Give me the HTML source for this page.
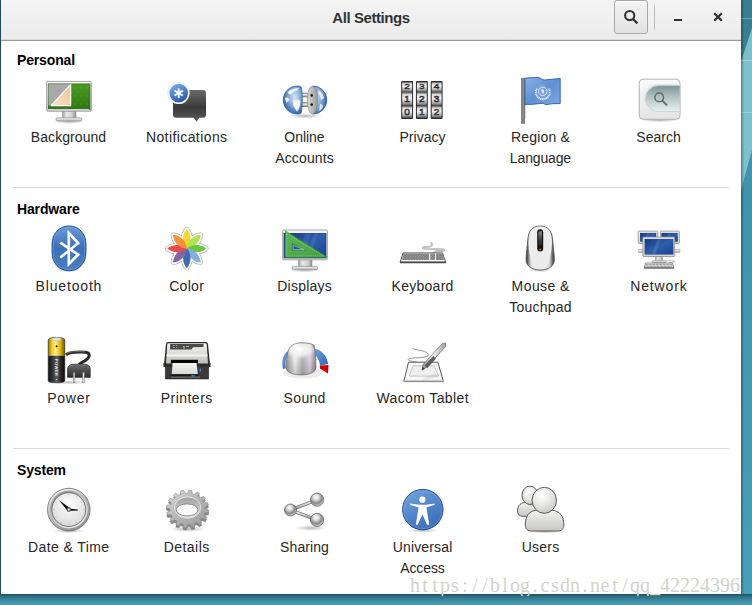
<!DOCTYPE html>
<html><head><meta charset="utf-8">
<style>
html,body{margin:0;padding:0;width:752px;height:605px;overflow:hidden;}
body{position:relative;font-family:"Liberation Sans",sans-serif;background:#3f94ad;}
#desk{position:absolute;left:0;top:0;}
#win{position:absolute;left:1px;top:0;width:740px;height:594px;background:#fff;overflow:hidden;}
#hb{position:absolute;left:1px;top:0;width:740px;height:40px;background:linear-gradient(180deg,#f4f4f4,#ebebeb);border-bottom:1px solid #9a9a9a;box-shadow:inset 0 -1px #dadada;}
#title{position:absolute;left:1px;top:0;width:740px;text-align:center;font-weight:bold;font-size:15px;line-height:36px;color:#2e3436;letter-spacing:-0.42px;}
.sec{position:absolute;left:17px;font-weight:bold;font-size:14px;color:#000;line-height:16px;letter-spacing:-0.15px;}
.sep{position:absolute;left:13px;width:716px;height:1px;background:#dcdcdc;}
.ic{position:absolute;overflow:visible;}
.lb{position:absolute;width:118px;text-align:center;font-size:14px;line-height:21px;color:#262626;white-space:nowrap;}
#sbtn{position:absolute;left:614px;top:0px;width:32px;height:32px;border:1px solid #a8a8a8;border-radius:3px;background:linear-gradient(180deg,#f4f4f4,#e2e2e2);box-shadow:inset 0 1px #fff;}
#wm{position:absolute;left:410px;top:574px;width:331px;height:22px;overflow:hidden;font-family:"Liberation Serif",serif;font-size:20px;line-height:22px;color:#d2d2cb;white-space:nowrap;}
#wm span{display:inline-block;width:10px;text-align:center;}
</style></head><body>
<svg id="desk" width="752" height="605" viewBox="0 0 752 605">
<defs>
<linearGradient id="dBase" x1="0" y1="0" x2="0" y2="1"><stop offset="0" stop-color="#3d8ea4"/><stop offset="1" stop-color="#47a0b8"/></linearGradient>
<linearGradient id="dBot" x1="0" y1="0" x2="0" y2="1"><stop offset="0" stop-color="#22505e"/><stop offset="0.3" stop-color="#33768a"/><stop offset="0.65" stop-color="#3f90a8"/><stop offset="1" stop-color="#459cb4"/></linearGradient>
<linearGradient id="dR" x1="0" y1="0" x2="1" y2="0"><stop offset="0" stop-color="#000" stop-opacity="0.35"/><stop offset="1" stop-color="#000" stop-opacity="0"/></linearGradient>
</defs>
<rect width="752" height="605" fill="url(#dBase)"/>
<polygon points="741,0 752,0 752,28 741,62" fill="#3a7d8e"/>
<polygon points="741,62 752,28 752,150 741,190" fill="#7cc0cc"/>
<line x1="741" y1="18.5" x2="752" y2="18.5" stroke="#8cc6d0" stroke-width="1" opacity="0.6"/>
<line x1="741" y1="60.5" x2="752" y2="60.5" stroke="#b8e0e6" stroke-width="1" opacity="0.6"/>
<line x1="741" y1="112.5" x2="752" y2="112.5" stroke="#b8e0e6" stroke-width="1" opacity="0.5"/>
<rect x="0" y="594" width="752" height="11" fill="url(#dBot)"/>
<rect x="741" y="0" width="3" height="594" fill="url(#dR)"/>
<rect x="0" y="0" width="1" height="594" fill="#1c4c5c"/>
</svg>
<div id="win"></div>
<svg width="0" height="0" style="position:absolute;left:0;top:0"><defs>
<linearGradient id="gBezel" x1="0" y1="0" x2="0" y2="1"><stop offset="0" stop-color="#f4f4f4"/><stop offset="1" stop-color="#d4d4d4"/></linearGradient>
<linearGradient id="gNeck" x1="0" y1="0" x2="1" y2="0"><stop offset="0" stop-color="#a0a0a0"/><stop offset="0.3" stop-color="#e8e8e8"/><stop offset="0.7" stop-color="#d0d0d0"/><stop offset="1" stop-color="#909090"/></linearGradient>
<linearGradient id="gFoot" x1="0" y1="0" x2="0" y2="1"><stop offset="0" stop-color="#f8f8f8"/><stop offset="1" stop-color="#b8b8b8"/></linearGradient>
<radialGradient id="gShadow" cx="0.5" cy="0.5" r="0.5"><stop offset="0" stop-color="#000" stop-opacity="0.28"/><stop offset="1" stop-color="#000" stop-opacity="0"/></radialGradient>
<linearGradient id="gGreen" x1="0" y1="0" x2="0" y2="1"><stop offset="0" stop-color="#4a9a22"/><stop offset="1" stop-color="#2f7a12"/></linearGradient>
<linearGradient id="gCream" x1="1" y1="0" x2="0" y2="1"><stop offset="0" stop-color="#e9c393"/><stop offset="1" stop-color="#fbe6c8"/></linearGradient>
<linearGradient id="gBubble" x1="0" y1="0" x2="0" y2="1"><stop offset="0" stop-color="#6a6a6a"/><stop offset="0.55" stop-color="#3a3a3a"/><stop offset="1" stop-color="#5c5c5c"/></linearGradient>
<linearGradient id="gBlueBall" x1="0.2" y1="0" x2="0.7" y2="1"><stop offset="0" stop-color="#7aaeea"/><stop offset="1" stop-color="#2456a8"/></linearGradient>
<linearGradient id="gBlueOval" x1="0" y1="0" x2="0" y2="1"><stop offset="0" stop-color="#6a9ad8"/><stop offset="0.5" stop-color="#3c70b8"/><stop offset="1" stop-color="#4a7ec4"/></linearGradient>
<linearGradient id="gScreen" x1="0" y1="0" x2="1" y2="1"><stop offset="0" stop-color="#16387e"/><stop offset="0.5" stop-color="#2e5eae"/><stop offset="1" stop-color="#1a4290"/></linearGradient>
<linearGradient id="gCell" x1="0" y1="0" x2="0" y2="1"><stop offset="0" stop-color="#4a4a4a"/><stop offset="0.18" stop-color="#d8d8d8"/><stop offset="0.45" stop-color="#f4f4f4"/><stop offset="0.8" stop-color="#a8a8a8"/><stop offset="1" stop-color="#4a4a4a"/></linearGradient>
<linearGradient id="gFlag" x1="0" y1="0" x2="1" y2="1"><stop offset="0" stop-color="#8ab2e6"/><stop offset="0.5" stop-color="#5e90d4"/><stop offset="1" stop-color="#80a8e0"/></linearGradient>
<linearGradient id="gPole" x1="0" y1="0" x2="1" y2="0"><stop offset="0" stop-color="#5a5a5a"/><stop offset="0.5" stop-color="#9a9a9a"/><stop offset="1" stop-color="#5a5a5a"/></linearGradient>
<linearGradient id="gSearchBox" x1="0" y1="0" x2="0" y2="1"><stop offset="0" stop-color="#fafafa"/><stop offset="1" stop-color="#e4e4e4"/></linearGradient>
<linearGradient id="gSearchField" x1="0" y1="0" x2="0" y2="1"><stop offset="0" stop-color="#7d9696"/><stop offset="0.5" stop-color="#b8c8c8"/><stop offset="1" stop-color="#eef2f2"/></linearGradient>

<radialGradient id="gGlobe" cx="0.6" cy="0.4" r="0.65"><stop offset="0" stop-color="#d6e6f6"/><stop offset="0.55" stop-color="#7aa4d8"/><stop offset="1" stop-color="#2a5aa0"/></radialGradient>
<radialGradient id="gGlobeR" cx="0.3" cy="0.4" r="0.75"><stop offset="0" stop-color="#c8dcf2"/><stop offset="0.6" stop-color="#6a98d0"/><stop offset="1" stop-color="#2a5aa0"/></radialGradient>
<linearGradient id="gFace" x1="0" y1="0" x2="1" y2="0"><stop offset="0" stop-color="#d8d8d8"/><stop offset="0.5" stop-color="#b8b8b8"/><stop offset="1" stop-color="#9a9a9a"/></linearGradient>
<linearGradient id="gPin" x1="0" y1="0" x2="0" y2="1"><stop offset="0" stop-color="#909090"/><stop offset="0.4" stop-color="#f0f0f0"/><stop offset="1" stop-color="#7a7a7a"/></linearGradient>

<pattern id="pKeys" width="1.6" height="1.6" patternUnits="userSpaceOnUse"><rect width="1.6" height="1.6" fill="#6a6a6a"/><rect width="0.8" height="0.8" fill="#a8a8a8"/><rect x="0.8" y="0.8" width="0.8" height="0.8" fill="#a0a0a0"/></pattern>
<linearGradient id="gSquare" x1="0" y1="0" x2="1" y2="1"><stop offset="0" stop-color="#62c24e" stop-opacity="0.9"/><stop offset="1" stop-color="#48a838" stop-opacity="0.9"/></linearGradient>
<linearGradient id="gKbd" x1="0" y1="0" x2="0" y2="1"><stop offset="0" stop-color="#f0f0f0"/><stop offset="1" stop-color="#d0d0d0"/></linearGradient>
<linearGradient id="gMouse" x1="0" y1="0" x2="1" y2="0"><stop offset="0" stop-color="#2a2a2a"/><stop offset="0.18" stop-color="#e6e6e6"/><stop offset="0.5" stop-color="#f2f2f2"/><stop offset="0.82" stop-color="#e0e0e0"/><stop offset="1" stop-color="#2a2a2a"/></linearGradient>
<linearGradient id="gMouseTop" x1="0" y1="0" x2="0" y2="1"><stop offset="0" stop-color="#fff" stop-opacity="0"/><stop offset="0.55" stop-color="#fff" stop-opacity="0"/><stop offset="1" stop-color="#000" stop-opacity="0.0"/></linearGradient>
<linearGradient id="gWheel" x1="0" y1="0" x2="0" y2="1"><stop offset="0" stop-color="#888"/><stop offset="0.5" stop-color="#444"/><stop offset="1" stop-color="#222"/></linearGradient>

<linearGradient id="gBatY" x1="0" y1="0" x2="1" y2="0"><stop offset="0" stop-color="#8a6e00"/><stop offset="0.2" stop-color="#e8c820"/><stop offset="0.45" stop-color="#fff080"/><stop offset="0.75" stop-color="#d8b010"/><stop offset="1" stop-color="#6a5400"/></linearGradient>
<linearGradient id="gBatK" x1="0" y1="0" x2="1" y2="0"><stop offset="0" stop-color="#111"/><stop offset="0.3" stop-color="#3a3a3a"/><stop offset="0.5" stop-color="#5a6060"/><stop offset="0.75" stop-color="#2a2a2a"/><stop offset="1" stop-color="#0a0a0a"/></linearGradient>
<linearGradient id="gPlug" x1="0" y1="0" x2="0" y2="1"><stop offset="0" stop-color="#6a6a6a"/><stop offset="1" stop-color="#2e2e2e"/></linearGradient>
<linearGradient id="gPrinterTop" x1="0" y1="0" x2="0" y2="1"><stop offset="0" stop-color="#f0f0f0"/><stop offset="0.6" stop-color="#d8d8d4"/><stop offset="1" stop-color="#bcbcb8"/></linearGradient>
<linearGradient id="gPaper" x1="0" y1="0" x2="0" y2="1"><stop offset="0" stop-color="#f4f4f2"/><stop offset="1" stop-color="#d8d8d4"/></linearGradient>
<linearGradient id="gKnob" x1="0" y1="0" x2="1" y2="0"><stop offset="0" stop-color="#9a9a9a"/><stop offset="0.3" stop-color="#f8f8f8"/><stop offset="0.55" stop-color="#b8b8b8"/><stop offset="0.8" stop-color="#e8d8e8"/><stop offset="1" stop-color="#8a8a8a"/></linearGradient>
<radialGradient id="gKnobTopR" cx="0.45" cy="0.35" r="0.6"><stop offset="0" stop-color="#fff" stop-opacity="1"/><stop offset="0.6" stop-color="#f4f4f4" stop-opacity="0.8"/><stop offset="1" stop-color="#e8e8e8" stop-opacity="0"/></radialGradient>
<linearGradient id="gKnobShade" x1="0" y1="0" x2="0" y2="1"><stop offset="0" stop-color="#000" stop-opacity="0"/><stop offset="0.5" stop-color="#000" stop-opacity="0.03"/><stop offset="1" stop-color="#000" stop-opacity="0.18"/></linearGradient>
<linearGradient id="gKnobTop" x1="0" y1="0" x2="1" y2="1"><stop offset="0" stop-color="#ffffff"/><stop offset="1" stop-color="#c8c8c8"/></linearGradient>
<linearGradient id="gArc" x1="0" y1="0" x2="1" y2="1"><stop offset="0" stop-color="#7aaae0"/><stop offset="1" stop-color="#2a62b0"/></linearGradient>
<linearGradient id="gPen" x1="0" y1="0" x2="1" y2="0"><stop offset="0" stop-color="#8a8a8a"/><stop offset="0.5" stop-color="#f0f0f0"/><stop offset="1" stop-color="#9a9a9a"/></linearGradient>

<linearGradient id="gBezelRing" x1="0" y1="0" x2="0" y2="1"><stop offset="0" stop-color="#e8e8e8"/><stop offset="0.5" stop-color="#9a9a9a"/><stop offset="1" stop-color="#d8d8d8"/></linearGradient>
<linearGradient id="gBevA" x1="0.2" y1="0" x2="0.8" y2="1"><stop offset="0" stop-color="#f2f2f2"/><stop offset="0.5" stop-color="#b4b4b4"/><stop offset="1" stop-color="#8a8a8a"/></linearGradient>
<linearGradient id="gBevB" x1="0.2" y1="0" x2="0.8" y2="1"><stop offset="0" stop-color="#8c8c8c"/><stop offset="0.5" stop-color="#c8c8c8"/><stop offset="1" stop-color="#f4f4f4"/></linearGradient>
<linearGradient id="gBezelRing2" x1="0" y1="0" x2="1" y2="1"><stop offset="0" stop-color="#f4f4f4"/><stop offset="0.5" stop-color="#d4d4d4"/><stop offset="1" stop-color="#f0f0f0"/></linearGradient>
<radialGradient id="gFace2" cx="0.5" cy="0.35" r="0.7"><stop offset="0" stop-color="#ffffff"/><stop offset="1" stop-color="#d6d6d6"/></radialGradient>
<linearGradient id="gGear" x1="0" y1="0" x2="1" y2="1"><stop offset="0" stop-color="#dcdcdc"/><stop offset="0.5" stop-color="#b4b4b4"/><stop offset="1" stop-color="#9a9a9a"/></linearGradient>
<linearGradient id="gGearRim" x1="0" y1="0" x2="0" y2="1"><stop offset="0" stop-color="#a0a0a0"/><stop offset="0.6" stop-color="#c8c8c8"/><stop offset="1" stop-color="#e8e8e8"/></linearGradient>
<radialGradient id="gBall" cx="0.42" cy="0.32" r="0.7"><stop offset="0" stop-color="#ffffff"/><stop offset="0.3" stop-color="#dcdcdc"/><stop offset="0.65" stop-color="#888888"/><stop offset="1" stop-color="#d0d0d0"/></radialGradient>
<linearGradient id="gRod" x1="0" y1="0" x2="0" y2="1"><stop offset="0" stop-color="#fafafa"/><stop offset="1" stop-color="#9a9a9a"/></linearGradient>
<linearGradient id="gUA" x1="0.2" y1="0" x2="0.8" y2="1"><stop offset="0" stop-color="#72a2dc"/><stop offset="0.6" stop-color="#4a7ec6"/><stop offset="1" stop-color="#3a6cb4"/></linearGradient>
<radialGradient id="gUser" cx="0.4" cy="0.3" r="0.75"><stop offset="0" stop-color="#ffffff"/><stop offset="0.6" stop-color="#e2e2de"/><stop offset="1" stop-color="#c4c4c0"/></radialGradient>
<linearGradient id="gUserBody" x1="0" y1="0" x2="0" y2="1"><stop offset="0" stop-color="#f6f6f4"/><stop offset="0.5" stop-color="#dcdcd8"/><stop offset="1" stop-color="#c8c8c4"/></linearGradient>
</defs></svg>
<div id="hb"></div>
<div id="title">All Settings</div>
<div id="sbtn"></div>
<svg style="position:absolute;left:614px;top:0" width="34" height="34" viewBox="0 0 34 34"><circle cx="15.7" cy="15.6" r="4.6" fill="none" stroke="#2e3436" stroke-width="2.1"/><line x1="19" y1="19" x2="23.4" y2="23.4" stroke="#2e3436" stroke-width="2.3" stroke-linecap="butt"/></svg>
<div style="position:absolute;left:654px;top:2px;width:1px;height:31px;background:linear-gradient(180deg,rgba(180,180,180,0),#b8b8b8 20%,#b8b8b8 80%,rgba(180,180,180,0))"></div>
<div style="position:absolute;left:674px;top:18.5px;width:8px;height:2.5px;background:#2e3436"></div>
<svg style="position:absolute;left:710px;top:9px" width="16" height="16" viewBox="0 0 16 16"><path d="M4.2 4.2L11.8 11.8M11.8 4.2L4.2 11.8" stroke="#2e3436" stroke-width="2.3"/></svg>

<div class="sec" style="top:51.85px">Personal</div>
<div class="sep" style="top:187px"></div>
<div class="sec" style="top:201px">Hardware</div>
<div class="sep" style="top:448px"></div>
<div class="sec" style="top:462px">System</div>
<div class="lb" style="left:9.5px;top:126.85px"><span style="letter-spacing:0.06px;margin-right:-0.06px">Background</span></div>
<svg class="ic" style="left:45px;top:76px" width="48" height="48" viewBox="0 0 48 48"><g transform="translate(0,0)">
<ellipse cx="24" cy="45.5" rx="15" ry="2.5" fill="url(#gShadow)"/>
<rect x="17.5" y="35" width="13.5" height="8" fill="url(#gNeck)" stroke="#9a9a9a" stroke-width="0.6"/>
<rect x="11" y="41.8" width="25.8" height="3.2" rx="1.6" fill="url(#gFoot)" stroke="#8a8a8a" stroke-width="0.7"/>
<rect x="1.6" y="5.4" width="44.8" height="29.8" rx="1.2" fill="url(#gBezel)" stroke="#9c9c9c" stroke-width="0.9"/>

<rect x="3.2" y="7.9" width="41.8" height="24.8" fill="url(#gGreen)" stroke="#1f5a0a" stroke-width="0.6"/>
<g fill="#7cc050" opacity="0.2"><circle cx="30" cy="12" r="1"/><circle cx="36" cy="12" r="1"/><circle cx="42" cy="12" r="1"/><circle cx="33" cy="16" r="1"/><circle cx="39" cy="16" r="1"/><circle cx="30" cy="20" r="1"/><circle cx="36" cy="20" r="1"/><circle cx="42" cy="20" r="1"/><circle cx="33" cy="24" r="1"/><circle cx="39" cy="24" r="1"/><circle cx="30" cy="28" r="1"/><circle cx="36" cy="28" r="1"/><circle cx="42" cy="28" r="1"/></g>
<rect x="3.5" y="8.2" width="22.2" height="21.3" fill="#a9a9a9"/>
<path d="M6.2 29.6 L25.6 8.6 L25.6 29.6 Z" fill="url(#gCream)" stroke="#fff" stroke-width="1.3" stroke-linejoin="round"/>
<rect x="44" y="33.2" width="1.6" height="0.8" fill="#555"/>

</g></svg>
<div class="lb" style="left:127.5px;top:126.85px"><span style="letter-spacing:0.41px;margin-right:-0.41px">Notifications</span></div>
<svg class="ic" style="left:163px;top:76px" width="48" height="48" viewBox="0 0 48 48"><g transform="translate(-1,0)">
<path d="M14 13.9 H41 Q44 13.9 44 16.9 V38.7 Q44 41.7 41 41.7 H37.2 L34.5 45.8 L31.8 41.7 H14 Q11 41.7 11 38.7 V16.9 Q11 13.9 14 13.9 Z" fill="url(#gBubble)"/>
<circle cx="16.7" cy="17.1" r="11" fill="#fff"/>
<circle cx="16.7" cy="17.1" r="11" fill="none" stroke="#000" stroke-opacity="0.12" stroke-width="0.8"/>
<circle cx="16.7" cy="17.1" r="9.3" fill="url(#gBlueBall)"/>
<g stroke="#fff" stroke-width="2" stroke-linecap="butt"><line x1="16.7" y1="12.3" x2="16.7" y2="21.9"/><line x1="12.5" y1="14.7" x2="20.9" y2="19.5"/><line x1="12.5" y1="19.5" x2="20.9" y2="14.7"/></g>
</g></svg>
<div class="lb" style="left:245.5px;top:126.85px"><span style="letter-spacing:-0.04px;margin-right:0.04px">Online</span><br><span style="letter-spacing:0.14px;margin-right:-0.14px">Accounts</span></div>
<svg class="ic" style="left:281px;top:76px" width="48" height="48" viewBox="0 0 48 48"><g transform="translate(-1,0)">
<ellipse cx="25" cy="40" rx="18" ry="2.6" fill="url(#gShadow)"/>
<rect x="20.5" y="17" width="8" height="4" fill="url(#gPin)" stroke="#6a6a6a" stroke-width="0.5"/>
<rect x="20.5" y="26.6" width="8" height="4" fill="url(#gPin)" stroke="#6a6a6a" stroke-width="0.5"/>
<path d="M20.6 10.4 A14 14 0 1 0 20.6 37.6 A1.6 13.6 0 0 0 20.6 10.4 Z" fill="url(#gGlobe)" stroke="#2a5a9e" stroke-width="0.8"/>
<path d="M7.5 16.5 Q12 11.6 19 12 L17.5 14.4 Q13 15.4 11.4 18.4 Q9 19 7.5 16.5 Z M12.6 24.4 Q16.6 22.2 20.2 24.6 Q20.8 31 17.2 35.6 Q14.6 32 13.2 29.6 Z M5 22 Q8.4 20.6 9.6 24 L6.4 27 Z" fill="#f4f4f0" stroke="#b8c4cc" stroke-width="0.3"/>
<path d="M32.8 10 A14 14 0 0 1 32.8 38 Z" fill="url(#gGlobeR)" stroke="#2a5a9e" stroke-width="0.8"/>
<path d="M39 14 Q43 17 44 22 L41 24 Q40 19 38 17 Z M40 28 Q43 28 43 31 Q41 34 39 35 Z" fill="#f2f2f0" opacity="0.85"/>
<ellipse cx="32.5" cy="24" rx="5.2" ry="14" fill="url(#gFace)" stroke="#7a7a7a" stroke-width="0.6"/>
<ellipse cx="31.7" cy="19.4" rx="1.2" ry="1.3" fill="#111"/>
<ellipse cx="31.7" cy="28.6" rx="1.2" ry="1.3" fill="#111"/>
</g></svg>
<div class="lb" style="left:363.5px;top:126.85px"><span style="letter-spacing:0.02px;margin-right:-0.02px">Privacy</span></div>
<svg class="ic" style="left:399px;top:76px" width="48" height="48" viewBox="0 0 48 48"><g transform="translate(-1,0)"><rect x="3.2" y="4.9" width="11.9" height="38" rx="1.2" fill="#2a2a2a"/><rect x="4.2" y="5.9" width="9.9" height="10.1" fill="url(#gCell)"/><text x="0" y="0" transform="translate(9.15,10.4) scale(1.05,0.72)" dy="3.4" font-family="Liberation Sans" font-size="9.6" text-anchor="middle" fill="none" stroke="#2a2a2a" stroke-width="0.65">2</text><rect x="4.2" y="16.0" width="9.9" height="13.8" fill="url(#gCell)"/><text x="0" y="0" transform="translate(9.15,23.0) scale(1.05,1.0)" dy="3.4" font-family="Liberation Sans" font-size="9.6" text-anchor="middle" fill="none" stroke="#2a2a2a" stroke-width="0.65">1</text><rect x="4.2" y="29.8" width="9.9" height="12.1" fill="url(#gCell)"/><text x="0" y="0" transform="translate(9.15,36.4) scale(1.05,0.85)" dy="3.4" font-family="Liberation Sans" font-size="9.6" text-anchor="middle" fill="none" stroke="#2a2a2a" stroke-width="0.65">0</text><rect x="17.9" y="4.9" width="11.9" height="38" rx="1.2" fill="#2a2a2a"/><rect x="18.9" y="5.9" width="9.9" height="10.1" fill="url(#gCell)"/><text x="0" y="0" transform="translate(23.85,10.4) scale(1.05,0.72)" dy="3.4" font-family="Liberation Sans" font-size="9.6" text-anchor="middle" fill="none" stroke="#2a2a2a" stroke-width="0.65">3</text><rect x="18.9" y="16.0" width="9.9" height="13.8" fill="url(#gCell)"/><text x="0" y="0" transform="translate(23.85,23.0) scale(1.05,1.0)" dy="3.4" font-family="Liberation Sans" font-size="9.6" text-anchor="middle" fill="none" stroke="#2a2a2a" stroke-width="0.65">2</text><rect x="18.9" y="29.8" width="9.9" height="12.1" fill="url(#gCell)"/><text x="0" y="0" transform="translate(23.85,36.4) scale(1.05,0.85)" dy="3.4" font-family="Liberation Sans" font-size="9.6" text-anchor="middle" fill="none" stroke="#2a2a2a" stroke-width="0.65">1</text><rect x="32.7" y="4.9" width="11.9" height="38" rx="1.2" fill="#2a2a2a"/><rect x="33.7" y="5.9" width="9.9" height="10.1" fill="url(#gCell)"/><text x="0" y="0" transform="translate(38.65,10.4) scale(1.05,0.72)" dy="3.4" font-family="Liberation Sans" font-size="9.6" text-anchor="middle" fill="none" stroke="#2a2a2a" stroke-width="0.65">4</text><rect x="33.7" y="16.0" width="9.9" height="13.8" fill="url(#gCell)"/><text x="0" y="0" transform="translate(38.65,23.0) scale(1.05,1.0)" dy="3.4" font-family="Liberation Sans" font-size="9.6" text-anchor="middle" fill="none" stroke="#2a2a2a" stroke-width="0.65">3</text><rect x="33.7" y="29.8" width="9.9" height="12.1" fill="url(#gCell)"/><text x="0" y="0" transform="translate(38.65,36.4) scale(1.05,0.85)" dy="3.4" font-family="Liberation Sans" font-size="9.6" text-anchor="middle" fill="none" stroke="#2a2a2a" stroke-width="0.65">2</text></g></svg>
<div class="lb" style="left:481.5px;top:126.85px"><span style="letter-spacing:0.18px;margin-right:-0.18px">Region &amp;</span><br><span style="letter-spacing:-0.14px;margin-right:0.14px">Language</span></div>
<svg class="ic" style="left:517px;top:76px" width="48" height="48" viewBox="0 0 48 48"><g transform="translate(-1,0)">
<rect x="5.2" y="1.8" width="3.7" height="46" fill="url(#gPole)"/>
<path d="M8.9 2.2 Q16 1.2 23.5 1.8 Q26 4.2 29 4 Q37 3.2 44.2 2.4 L44.2 27.6 Q37 27.2 30 28.6 Q27 26.5 23 27.6 Q15 28.8 8.9 28.4 Z" fill="url(#gFlag)" stroke="#2c5aa4" stroke-width="0.9" stroke-linejoin="round"/>
<path d="M20.8 12.6 A7 7 0 0 0 26.8 23.2 M32.8 12.6 A7 7 0 0 1 26.8 23.2" fill="none" stroke="#f0f6fc" stroke-width="1.8" stroke-dasharray="1.2 0.5" opacity="0.9"/>
<circle cx="26.8" cy="15.4" r="4.2" fill="none" stroke="#f0f6fc" stroke-width="0.9" opacity="0.85"/>
<path d="M25 13.6 Q27 12.8 28.2 14.2 Q27 16 28.6 17.2 L26.4 17.6 Q25.4 16 25 13.6 Z" fill="#f0f6fc" opacity="0.8"/>
<ellipse cx="26" cy="15.5" rx="6" ry="7" fill="#fff" opacity="0.12"/>
<rect x="9" y="29" width="1.2" height="14" fill="#e0e0e0"/>
</g></svg>
<div class="lb" style="left:599.5px;top:126.85px"><span style="letter-spacing:0px;margin-right:0px">Search</span></div>
<svg class="ic" style="left:635px;top:76px" width="48" height="48" viewBox="0 0 48 48"><g transform="translate(-1,0)">
<ellipse cx="25.6" cy="44.2" rx="19" ry="2.2" fill="url(#gShadow)"/>
<rect x="5.2" y="3.2" width="40.8" height="40.1" rx="4" fill="url(#gSearchBox)" stroke="#a8a8a8" stroke-width="0.9"/>
<path d="M46 7.9 H24.2 A14.7 14.7 0 0 0 24.2 37.3 H46 Z" fill="#e6e9e9"/>
<path d="M46 9.6 H24.6 A13 13 0 0 0 24.6 35.6 H46 Z" fill="url(#gSearchField)" stroke="#c4cccc" stroke-width="0.8"/>
<circle cx="25.2" cy="21.4" r="4.3" fill="none" stroke="#636868" stroke-width="1.5"/>
<line x1="28.4" y1="24.6" x2="33" y2="29.4" stroke="#636868" stroke-width="1.8"/>
</g></svg>
<div class="lb" style="left:9.5px;top:276.05px"><span style="letter-spacing:0.83px;margin-right:-0.83px">Bluetooth</span></div>
<svg class="ic" style="left:45px;top:224px" width="48" height="48" viewBox="0 0 48 48">
<ellipse cx="24" cy="46" rx="14" ry="2" fill="url(#gShadow)"/>
<path d="M24 2 C34 2 40.9 10 40.9 20 V28.8 C40.9 38.8 34 46.8 24 46.8 C14 46.8 7.1 38.8 7.1 28.8 V20 C7.1 10 14 2 24 2 Z" fill="url(#gBlueOval)" stroke="#1d4c98" stroke-width="1"/>
<path d="M24 3.2 C33 3.2 39.7 10.6 39.7 20 V28.8 C39.7 38 33 45.6 24 45.6 C15 45.6 8.3 38 8.3 28.8 V20 C8.3 10.6 15 3.2 24 3.2 Z" fill="none" stroke="#8ab4e6" stroke-width="0.6" opacity="0.7"/>
<path d="M15.3 18.6 L33.2 30.6 L23.8 40 L23.8 9 L33.2 19.2 L15.3 33.4" fill="none" stroke="#fff" stroke-width="2.6" stroke-linejoin="miter" stroke-miterlimit="6"/>
</svg>
<div class="lb" style="left:127.5px;top:276.05px"><span style="letter-spacing:0.3px;margin-right:-0.3px">Color</span></div>
<svg class="ic" style="left:163px;top:224px" width="48" height="48" viewBox="0 0 48 48"><g><path d="M0 0 C4.9 -5 4.9 -14.5 0 -19.6 C-4.9 -14.5 -4.9 -5 0 0 Z" transform="translate(23.8,24.6) rotate(0)" fill="#bbb" stroke="#b0b0b0" stroke-width="4.4" stroke-linejoin="round"/><path d="M0 0 C4.9 -5 4.9 -14.5 0 -19.6 C-4.9 -14.5 -4.9 -5 0 0 Z" transform="translate(23.8,24.6) rotate(45)" fill="#bbb" stroke="#b0b0b0" stroke-width="4.4" stroke-linejoin="round"/><path d="M0 0 C4.9 -5 4.9 -14.5 0 -19.6 C-4.9 -14.5 -4.9 -5 0 0 Z" transform="translate(23.8,24.6) rotate(90)" fill="#bbb" stroke="#b0b0b0" stroke-width="4.4" stroke-linejoin="round"/><path d="M0 0 C4.9 -5 4.9 -14.5 0 -19.6 C-4.9 -14.5 -4.9 -5 0 0 Z" transform="translate(23.8,24.6) rotate(135)" fill="#bbb" stroke="#b0b0b0" stroke-width="4.4" stroke-linejoin="round"/><path d="M0 0 C4.9 -5 4.9 -14.5 0 -19.6 C-4.9 -14.5 -4.9 -5 0 0 Z" transform="translate(23.8,24.6) rotate(180)" fill="#bbb" stroke="#b0b0b0" stroke-width="4.4" stroke-linejoin="round"/><path d="M0 0 C4.9 -5 4.9 -14.5 0 -19.6 C-4.9 -14.5 -4.9 -5 0 0 Z" transform="translate(23.8,24.6) rotate(225)" fill="#bbb" stroke="#b0b0b0" stroke-width="4.4" stroke-linejoin="round"/><path d="M0 0 C4.9 -5 4.9 -14.5 0 -19.6 C-4.9 -14.5 -4.9 -5 0 0 Z" transform="translate(23.8,24.6) rotate(270)" fill="#bbb" stroke="#b0b0b0" stroke-width="4.4" stroke-linejoin="round"/><path d="M0 0 C4.9 -5 4.9 -14.5 0 -19.6 C-4.9 -14.5 -4.9 -5 0 0 Z" transform="translate(23.8,24.6) rotate(315)" fill="#bbb" stroke="#b0b0b0" stroke-width="4.4" stroke-linejoin="round"/><path d="M0 0 C4.9 -5 4.9 -14.5 0 -19.6 C-4.9 -14.5 -4.9 -5 0 0 Z" transform="translate(23.8,24.6) rotate(0)" fill="#fff" stroke="#fff" stroke-width="3" stroke-linejoin="round"/><path d="M0 0 C4.9 -5 4.9 -14.5 0 -19.6 C-4.9 -14.5 -4.9 -5 0 0 Z" transform="translate(23.8,24.6) rotate(45)" fill="#fff" stroke="#fff" stroke-width="3" stroke-linejoin="round"/><path d="M0 0 C4.9 -5 4.9 -14.5 0 -19.6 C-4.9 -14.5 -4.9 -5 0 0 Z" transform="translate(23.8,24.6) rotate(90)" fill="#fff" stroke="#fff" stroke-width="3" stroke-linejoin="round"/><path d="M0 0 C4.9 -5 4.9 -14.5 0 -19.6 C-4.9 -14.5 -4.9 -5 0 0 Z" transform="translate(23.8,24.6) rotate(135)" fill="#fff" stroke="#fff" stroke-width="3" stroke-linejoin="round"/><path d="M0 0 C4.9 -5 4.9 -14.5 0 -19.6 C-4.9 -14.5 -4.9 -5 0 0 Z" transform="translate(23.8,24.6) rotate(180)" fill="#fff" stroke="#fff" stroke-width="3" stroke-linejoin="round"/><path d="M0 0 C4.9 -5 4.9 -14.5 0 -19.6 C-4.9 -14.5 -4.9 -5 0 0 Z" transform="translate(23.8,24.6) rotate(225)" fill="#fff" stroke="#fff" stroke-width="3" stroke-linejoin="round"/><path d="M0 0 C4.9 -5 4.9 -14.5 0 -19.6 C-4.9 -14.5 -4.9 -5 0 0 Z" transform="translate(23.8,24.6) rotate(270)" fill="#fff" stroke="#fff" stroke-width="3" stroke-linejoin="round"/><path d="M0 0 C4.9 -5 4.9 -14.5 0 -19.6 C-4.9 -14.5 -4.9 -5 0 0 Z" transform="translate(23.8,24.6) rotate(315)" fill="#fff" stroke="#fff" stroke-width="3" stroke-linejoin="round"/><g opacity="0.9"><path d="M0 0 C4.9 -5 4.9 -14.5 0 -19.6 C-4.9 -14.5 -4.9 -5 0 0 Z" transform="translate(23.8,24.6) rotate(0)" fill="#f2d41a"/><path d="M0 0 C4.9 -5 4.9 -14.5 0 -19.6 C-4.9 -14.5 -4.9 -5 0 0 Z" transform="translate(23.8,24.6) rotate(45)" fill="#a8e03a"/><path d="M0 0 C4.9 -5 4.9 -14.5 0 -19.6 C-4.9 -14.5 -4.9 -5 0 0 Z" transform="translate(23.8,24.6) rotate(90)" fill="#5cc02a"/><path d="M0 0 C4.9 -5 4.9 -14.5 0 -19.6 C-4.9 -14.5 -4.9 -5 0 0 Z" transform="translate(23.8,24.6) rotate(135)" fill="#78a6dc"/><path d="M0 0 C4.9 -5 4.9 -14.5 0 -19.6 C-4.9 -14.5 -4.9 -5 0 0 Z" transform="translate(23.8,24.6) rotate(180)" fill="#2a5aa8"/><path d="M0 0 C4.9 -5 4.9 -14.5 0 -19.6 C-4.9 -14.5 -4.9 -5 0 0 Z" transform="translate(23.8,24.6) rotate(225)" fill="#7a5698"/><path d="M0 0 C4.9 -5 4.9 -14.5 0 -19.6 C-4.9 -14.5 -4.9 -5 0 0 Z" transform="translate(23.8,24.6) rotate(270)" fill="#e83838"/><path d="M0 0 C4.9 -5 4.9 -14.5 0 -19.6 C-4.9 -14.5 -4.9 -5 0 0 Z" transform="translate(23.8,24.6) rotate(315)" fill="#f28a22"/></g></g></svg>
<div class="lb" style="left:245.5px;top:276.05px"><span style="letter-spacing:0.23px;margin-right:-0.23px">Displays</span></div>
<svg class="ic" style="left:281px;top:224px" width="48" height="48" viewBox="0 0 48 48"><g transform="translate(0,0.6)">
<ellipse cx="24" cy="45.5" rx="15" ry="2.5" fill="url(#gShadow)"/>
<rect x="17.5" y="35" width="13.5" height="8" fill="url(#gNeck)" stroke="#9a9a9a" stroke-width="0.6"/>
<rect x="11" y="41.8" width="25.8" height="3.2" rx="1.6" fill="url(#gFoot)" stroke="#8a8a8a" stroke-width="0.7"/>
<rect x="1.6" y="5.4" width="44.8" height="29.8" rx="1.2" fill="url(#gBezel)" stroke="#9c9c9c" stroke-width="0.9"/>

<rect x="3" y="8.7" width="42" height="24.6" fill="url(#gScreen)" stroke="#0d2a66" stroke-width="0.6"/>
<path d="M24 8.7 L30 8.7 L22 33.3 L16 33.3 Z M33 8.7 L37 8.7 L29 33.3 L25 33.3 Z" fill="#fff" opacity="0.07"/>
<path d="M4.4 6.3 L4.4 32.5 L46 32.5 Z M11.1 18.7 L11.1 25.8 L25.4 25.8 Z" fill="url(#gSquare)" fill-rule="evenodd" stroke="#3aa02a" stroke-width="0.7"/>
<path d="M5.6 9.2 L5.6 31.4 L42.6 31.4 Z" fill="none" stroke="#b8f0a8" stroke-width="0.5" stroke-dasharray="1.2 0.9" opacity="0.85"/><path d="M12.1 20.6 L12.1 25 L23.2 25 Z" fill="none" stroke="#b8f0a8" stroke-width="0.6" opacity="0.9"/>

</g></svg>
<div class="lb" style="left:363.5px;top:276.05px"><span style="letter-spacing:0.27px;margin-right:-0.27px">Keyboard</span></div>
<svg class="ic" style="left:399px;top:224px" width="48" height="48" viewBox="0 0 48 48">
<path d="M31.7 18.6 Q34.4 20.6 31.6 22.4 Q27 23 24.6 23.2 Q22.6 24.4 26 24.8 Q40 25 44.6 25.4 Q46.6 26.4 44 26.8 Q36 26.9 35.3 27.6 L35.1 29" fill="none" stroke="#9a9a96" stroke-width="1.7"/>
<path d="M31.7 18.6 Q34.4 20.6 31.6 22.4 Q27 23 24.6 23.2 Q22.6 24.4 26 24.8 Q40 25 44.6 25.4 Q46.6 26.4 44 26.8 Q36 26.9 35.3 27.6 L35.1 29" fill="none" stroke="#eeeeec" stroke-width="0.7"/>
<path d="M4.1 28.9 H43.4 L46.9 38.8 H1 Z" fill="#f4f4f4" stroke="#4a4a4a" stroke-width="0.9" stroke-linejoin="round"/>
<path d="M4.3 29.5 H30 V35.9 H3 Z" fill="url(#pKeys)"/>
<path d="M31.3 29.5 H36 V35.9 H31.3 Z" fill="url(#pKeys)"/>
<path d="M37 29.5 H43.6 L44.8 35.9 H37 Z" fill="url(#pKeys)"/>
<path d="M1.2 38.2 H46.7" stroke="#333" stroke-width="1.3"/>
</svg>
<div class="lb" style="left:481.5px;top:276.05px"><span style="letter-spacing:0.43px;margin-right:-0.43px">Mouse &amp;</span><br><span style="letter-spacing:0.22px;margin-right:-0.22px">Touchpad</span></div>
<svg class="ic" style="left:517px;top:224px" width="48" height="48" viewBox="0 0 48 48">
<ellipse cx="23.5" cy="46" rx="13" ry="2" fill="url(#gShadow)"/>
<path d="M23.2 2 C31 2 35 7 35.5 15 C36 22 37.3 29 37.3 36 C37.3 42 31.5 46 23.2 46 C15 46 9.1 42 9.1 36 C9.1 29 10.4 22 10.9 15 C11.4 7 15.4 2 23.2 2 Z" fill="url(#gMouse)" stroke="#4a4a4a" stroke-width="0.8"/>
<path d="M23.2 2.8 C30.5 2.8 34.3 7.5 34.8 15 C35.2 21 34.6 26 33.4 31 C32.2 37 31.6 43.4 23.2 45 C14.8 43.4 14.2 37 13 31 C11.8 26 11.2 21 11.6 15 C12.1 7.5 15.9 2.8 23.2 2.8 Z" fill="#ececec"/>
<rect x="20.2" y="5.2" width="6" height="22.2" rx="3" fill="#111"/>
<rect x="21.3" y="7" width="3.8" height="15" rx="1.9" fill="url(#gWheel)"/>
<circle cx="23.1" cy="25.6" r="1" fill="#e05a10"/>
</svg>
<div class="lb" style="left:599.5px;top:276.05px"><span style="letter-spacing:0.84px;margin-right:-0.84px">Network</span></div>
<svg class="ic" style="left:635px;top:224px" width="48" height="48" viewBox="0 0 48 48">
<rect x="3.5" y="25.4" width="9" height="3" rx="1" fill="url(#gFoot)" stroke="#8a8a8a" stroke-width="0.6"/>
<rect x="38.5" y="25.4" width="6.5" height="3" rx="1" fill="url(#gFoot)" stroke="#8a8a8a" stroke-width="0.6"/>
<rect x="3.2" y="7.1" width="19.4" height="12.3" rx="0.8" fill="url(#gBezel)" stroke="#8a8a8a" stroke-width="0.8"/><rect x="5.2" y="9.1" width="15.8" height="8.4" fill="url(#gScreen)" stroke="#0d2a66" stroke-width="0.4"/><path d="M12.31 9.1 h1.896 l-3.16 8.4 h-1.896 Z" fill="#fff" opacity="0.1"/><rect x="25.4" y="7.1" width="19" height="12.3" rx="0.8" fill="url(#gBezel)" stroke="#8a8a8a" stroke-width="0.8"/><rect x="26.8" y="9.1" width="15.8" height="8.4" fill="url(#gScreen)" stroke="#0d2a66" stroke-width="0.4"/><path d="M33.910000000000004 9.1 h1.896 l-3.16 8.4 h-1.896 Z" fill="#fff" opacity="0.1"/>
<path d="M30 37 Q38 36 40 37.5 Q38 38.5 34 38.6" fill="none" stroke="#b0b0b0" stroke-width="0.9"/>
<rect x="20.5" y="32" width="7" height="5" fill="url(#gNeck)" stroke="#9a9a9a" stroke-width="0.5"/>
<rect x="17" y="36.6" width="14" height="2.3" rx="1" fill="url(#gFoot)" stroke="#8a8a8a" stroke-width="0.6"/>
<rect x="7.9" y="13.1" width="31.8" height="19.4" rx="0.8" fill="url(#gBezel)" stroke="#8a8a8a" stroke-width="0.8"/><rect x="9.9" y="15.1" width="28.2" height="15.1" fill="url(#gScreen)" stroke="#0d2a66" stroke-width="0.4"/><path d="M22.59 15.1 h3.384 l-5.640000000000001 15.1 h-3.384 Z" fill="#fff" opacity="0.1"/>
<path d="M10.5 39 H37.5 L38.9 44.4 H9.1 Z" fill="url(#gKbd)" stroke="#6a6a6a" stroke-width="0.7" stroke-linejoin="round"/>
<g stroke="#7a7a7a" stroke-width="0.9" stroke-dasharray="0.9 0.5"><path d="M11 40.6 H37 M10.6 42.2 H37.4"/></g>
<path d="M9.6 43.6 H38.4" stroke="#5a5a5a" stroke-width="0.8"/>
</svg>
<div class="lb" style="left:9.5px;top:388.25px"><span style="letter-spacing:0.74px;margin-right:-0.74px">Power</span></div>
<svg class="ic" style="left:45px;top:336px" width="48" height="48" viewBox="0 0 48 48">
<ellipse cx="24" cy="46.5" rx="20" ry="1.8" fill="url(#gShadow)"/>
<path d="M21 18.8 C24 16.2 30 15.8 40 16.2 C46 16.7 45 21 41 24 C38 26 35.5 27 34 28.5" fill="none" stroke="#2a2a2a" stroke-width="3"/>
<path d="M21.5 17.8 C25 15.6 30 15.4 40 15.8" fill="none" stroke="#9a9a9a" stroke-width="0.6"/>
<path d="M22.6 41.3 V33 Q22.6 28.2 29 28.2 H39 Q45.2 28.2 45.2 33 V41.3 Z" fill="url(#gPlug)" stroke="#1a1a1a" stroke-width="0.7"/>
<rect x="28.2" y="36.5" width="1.7" height="10.3" fill="#e0e0e0" stroke="#6a6a6a" stroke-width="0.5"/>
<rect x="37.7" y="36.5" width="1.7" height="10.3" fill="#e0e0e0" stroke="#6a6a6a" stroke-width="0.5"/>
<path d="M23.6 32 Q24 29.2 28 29.2 H40 Q44.2 29.2 44.4 32" fill="none" stroke="#8a8a8a" stroke-width="0.5"/>
<path d="M3.2 4 Q3.2 1.4 11.5 1.4 Q19.8 1.4 19.8 4 V19.8 H3.2 Z" fill="url(#gBatY)"/>
<path d="M3.2 19.8 H19.8 V44.6 Q19.8 46.8 11.5 46.8 Q3.2 46.8 3.2 44.6 Z" fill="url(#gBatK)"/>
<path d="M3.2 4 Q3.2 1.4 11.5 1.4 Q19.8 1.4 19.8 4 V44.6 Q19.8 46.8 11.5 46.8 Q3.2 46.8 3.2 44.6 Z" fill="none" stroke="#222" stroke-width="0.6"/>
<ellipse cx="11.6" cy="3.2" rx="4.4" ry="1.6" fill="#e8e8e8" stroke="#9a9a9a" stroke-width="0.4"/>
<path d="M10.6 10.3 H12.6 M11.6 9.3 V11.3" stroke="#111" stroke-width="0.9"/>
<text x="0" y="0" transform="translate(9.9,22.8) rotate(90)" font-family="Liberation Sans" font-weight="bold" font-size="4.2" fill="#e0e0e0" letter-spacing="0.3">POWER</text>
<rect x="11" y="43" width="1.2" height="0.9" fill="#ddd"/>
</svg>
<div class="lb" style="left:127.5px;top:388.25px"><span style="letter-spacing:0.47px;margin-right:-0.47px">Printers</span></div>
<svg class="ic" style="left:163px;top:336px" width="48" height="48" viewBox="0 0 48 48">
<path d="M2.4 30 H45.6 V42.9 H2.4 Z" fill="#3a3a3a" stroke="#1a1a1a" stroke-width="0.6"/>
<path d="M0.4 27 H47.6 V31 H0.4 Z" fill="#2e2e2e"/>
<path d="M5.2 6 H42.8 Q44.6 6 45 8 L47 28.6 H1 L3 8 Q3.4 6 5.2 6 Z" fill="#2a2a2a"/>
<path d="M5.6 7.2 H42.4 Q43.6 7.2 43.8 8.6 L45 27.4 H3 L4.2 8.6 Q4.4 7.2 5.6 7.2 Z" fill="url(#gPrinterTop)"/>
<path d="M7.1 7.9 H40.5 V11 L30 11.2 L28.5 13.5 H7.1 Z" fill="#4a4a4a"/>
<g fill="#d8d8d8"><rect x="10" y="9.3" width="1.8" height="0.6"/><rect x="13" y="9.3" width="1.2" height="0.6"/><rect x="20" y="10" width="1.6" height="0.7"/><rect x="23" y="10" width="3" height="0.7"/><rect x="10" y="11.2" width="1.8" height="0.6"/><rect x="13" y="11.2" width="1.2" height="0.6"/><rect x="20" y="11.6" width="2" height="0.7"/></g>
<rect x="3.6" y="18.3" width="40.8" height="2.2" fill="#f8f8f6" opacity="0.8"/>
<rect x="7.9" y="23.8" width="27" height="3.6" fill="#050505"/>
<path d="M9.6 27 H33.5 L34.9 38.1 H8.7 Z" fill="url(#gPaper)"/>
<rect x="7.5" y="38.4" width="28" height="2" fill="#1a1a1a"/>
<rect x="8" y="40.6" width="29" height="1.2" fill="#6a6a6a"/>
<rect x="28.4" y="39.1" width="3.6" height="1.4" fill="#3a7ad0"/>
<rect x="36.6" y="32.6" width="1.4" height="3" fill="#4a8ae0"/>
</svg>
<div class="lb" style="left:245.5px;top:388.25px"><span style="letter-spacing:0.33px;margin-right:-0.33px">Sound</span></div>
<svg class="ic" style="left:281px;top:336px" width="48" height="48" viewBox="0 0 48 48">
<ellipse cx="22" cy="37" rx="20" ry="5.5" fill="#000" opacity="0.08"/>
<path d="M2 33 C0.2 26 1.8 18.6 7.4 14.6 L7.8 17.4 C4.6 21 4 26 4.8 32.4 Z" fill="url(#gArc)"/>
<path d="M33.6 12.6 C41 14.2 46.2 20.2 47 28 L39 29.6 C38.4 23.6 35.6 19.6 32 18 Z" fill="url(#gArc)"/>
<path d="M38.8 29.6 L47.6 29 L47 37.4 L38.8 32.4 Z" fill="#d40000"/>
<path d="M5.2 31.5 C5.2 24 6.3 17 7.6 14 C9.2 9 15 6.7 21 6.7 C26 6.7 30.5 7.6 32.4 9 L33 10.4 C34.4 14 34.9 23 34.9 31.5 C34.9 36.4 28 38.9 20 38.9 C12 38.9 5.2 36.4 5.2 31.5 Z" fill="url(#gKnob)" stroke="#6a6a6a" stroke-width="0.7"/>
<path d="M5.2 31.5 C5.2 24 6.3 17 7.6 14 C9.2 9 15 6.7 21 6.7 C26 6.7 30.5 7.6 32.4 9 L33 10.4 C34.4 14 34.9 23 34.9 31.5 C34.9 36.4 28 38.9 20 38.9 C12 38.9 5.2 36.4 5.2 31.5 Z" fill="url(#gKnobShade)"/>
<path d="M7.8 14.4 C9.6 9.4 15.4 7.4 21 7.4 C26 7.4 30.2 8.3 32 9.5 L32.6 11 C33.8 14 34.2 17 33.8 20 C30 23.6 24 24.4 19 24.2 C13 23.8 8 21.6 6.6 19.4 Z" fill="url(#gKnobTopR)"/>
<path d="M31.6 8.8 Q33.6 8.4 33.4 11.6" fill="none" stroke="#6a6a6a" stroke-width="0.7"/>
</svg>
<div class="lb" style="left:363.5px;top:388.25px"><span style="letter-spacing:0.38px;margin-right:-0.38px">Wacom Tablet</span></div>
<svg class="ic" style="left:399px;top:336px" width="48" height="48" viewBox="0 0 48 48">
<path d="M9.5 26.2 H38.9 L44.4 45.6 H4.8 Z" fill="#f6f6f6" stroke="#555" stroke-width="1" stroke-linejoin="round"/>
<path d="M5.2 44.2 H44 L44.4 45.6 H4.8 Z" fill="#bdbdbd"/>
<path d="M13.9 29.8 H34.9 L39.7 40.1 H10.3 Z" fill="#efefef" stroke="#b4b4b4" stroke-width="0.7"/>
<path d="M13.5 12.7 C20 14.5 28 15 29.4 18.3 C30 21.5 22 21.6 14 22 C8 22.4 8.4 24.2 11 24.8 C14 25.6 17 25.6 18 26" fill="none" stroke="#8a8a8a" stroke-width="0.9"/>
<ellipse cx="32" cy="41" rx="9" ry="2" fill="#000" opacity="0.06" transform="rotate(-20 32 41)"/>
<path d="M23 34.1 L24.2 28.4 L42.6 8.2 Q45.4 6.2 46.6 7.4 Q47.6 8.8 45.8 11.4 L27.4 31.4 Z" fill="url(#gPen)" stroke="#6a6a6a" stroke-width="0.7" stroke-linejoin="round"/>
<path d="M25.6 29.6 L34.4 20 L37 22.6 L28.2 32.2 Z" fill="#5e5e5e"/>
<path d="M23 34.1 L23.8 31 L25.8 33 Z" fill="#333"/>
</svg>
<div class="lb" style="left:9.5px;top:536.55px"><span style="letter-spacing:0.4px;margin-right:-0.4px">Date &amp; Time</span></div>
<svg class="ic" style="left:45px;top:485px" width="48" height="48" viewBox="0 0 48 48">
<ellipse cx="24" cy="46" rx="17" ry="2" fill="url(#gShadow)"/>
<circle cx="23.8" cy="24.6" r="21.3" fill="url(#gBevA)" stroke="#6e6e6e" stroke-width="0.8"/>
<circle cx="23.8" cy="24.6" r="18.9" fill="url(#gBevB)"/>
<circle cx="23.8" cy="24.6" r="16.9" fill="url(#gFace2)" stroke="#5a5a5a" stroke-width="0.8"/>
<line x1="23.80" y1="10.40" x2="23.80" y2="9.20" stroke="#9a9a9a" stroke-width="0.6"/><line x1="30.90" y1="12.30" x2="31.50" y2="11.26" stroke="#9a9a9a" stroke-width="0.6"/><line x1="36.10" y1="17.50" x2="37.14" y2="16.90" stroke="#9a9a9a" stroke-width="0.6"/><line x1="38.00" y1="24.60" x2="39.20" y2="24.60" stroke="#9a9a9a" stroke-width="0.6"/><line x1="36.10" y1="31.70" x2="37.14" y2="32.30" stroke="#9a9a9a" stroke-width="0.6"/><line x1="30.90" y1="36.90" x2="31.50" y2="37.94" stroke="#9a9a9a" stroke-width="0.6"/><line x1="23.80" y1="38.80" x2="23.80" y2="40.00" stroke="#9a9a9a" stroke-width="0.6"/><line x1="16.70" y1="36.90" x2="16.10" y2="37.94" stroke="#9a9a9a" stroke-width="0.6"/><line x1="11.50" y1="31.70" x2="10.46" y2="32.30" stroke="#9a9a9a" stroke-width="0.6"/><line x1="9.60" y1="24.60" x2="8.40" y2="24.60" stroke="#9a9a9a" stroke-width="0.6"/><line x1="11.50" y1="17.50" x2="10.46" y2="16.90" stroke="#9a9a9a" stroke-width="0.6"/><line x1="16.70" y1="12.30" x2="16.10" y2="11.26" stroke="#9a9a9a" stroke-width="0.6"/>
<path d="M13.9 15.1 L25.2 23.2 L22.6 26 Z" fill="#111"/>
<path d="M23.8 23.6 L32.9 24.4 L32.9 25.6 L23.8 26 Z" fill="#111"/>
<circle cx="23.8" cy="24.6" r="2.3" fill="#555"/>
<circle cx="23.8" cy="24.6" r="1.1" fill="#fff"/>
</svg>
<div class="lb" style="left:127.5px;top:536.55px"><span style="letter-spacing:0.45px;margin-right:-0.45px">Details</span></div>
<svg class="ic" style="left:163px;top:485px" width="48" height="48" viewBox="0 0 48 48">
<ellipse cx="24.6" cy="44" rx="18" ry="3" fill="url(#gShadow)"/>
<path d="M42.40 23.80 L45.76 24.91 L45.39 27.47 L41.82 27.74 L41.05 29.77 L43.67 32.00 L42.23 34.24 L38.79 33.22 L37.19 34.83 L38.68 37.85 L36.38 39.43 L33.60 37.26 L31.41 38.21 L31.55 41.56 L28.74 42.24 L27.04 39.25 L24.60 39.40 L23.35 42.57 L20.46 42.24 L20.11 38.89 L17.79 38.21 L15.35 40.72 L12.82 39.43 L13.86 36.24 L12.01 34.83 L8.75 36.29 L6.97 34.24 L9.24 31.69 L8.15 29.77 L4.57 29.96 L3.81 27.47 L6.97 25.94 L6.80 23.80 L3.44 22.69 L3.81 20.13 L7.38 19.86 L8.15 17.83 L5.53 15.60 L6.97 13.36 L10.41 14.38 L12.01 12.77 L10.52 9.75 L12.82 8.17 L15.60 10.34 L17.79 9.39 L17.65 6.04 L20.46 5.36 L22.16 8.35 L24.60 8.20 L25.85 5.03 L28.74 5.36 L29.09 8.71 L31.41 9.39 L33.85 6.88 L36.38 8.17 L35.34 11.36 L37.19 12.77 L40.45 11.31 L42.23 13.36 L39.96 15.91 L41.05 17.83 L44.63 17.64 L45.39 20.13 L42.23 21.66 Z" transform="translate(0,2.4)" fill="#8a8a8a" stroke="#7a7a7a" stroke-width="0.6"/>
<path d="M42.40 23.80 L45.76 24.91 L45.39 27.47 L41.82 27.74 L41.05 29.77 L43.67 32.00 L42.23 34.24 L38.79 33.22 L37.19 34.83 L38.68 37.85 L36.38 39.43 L33.60 37.26 L31.41 38.21 L31.55 41.56 L28.74 42.24 L27.04 39.25 L24.60 39.40 L23.35 42.57 L20.46 42.24 L20.11 38.89 L17.79 38.21 L15.35 40.72 L12.82 39.43 L13.86 36.24 L12.01 34.83 L8.75 36.29 L6.97 34.24 L9.24 31.69 L8.15 29.77 L4.57 29.96 L3.81 27.47 L6.97 25.94 L6.80 23.80 L3.44 22.69 L3.81 20.13 L7.38 19.86 L8.15 17.83 L5.53 15.60 L6.97 13.36 L10.41 14.38 L12.01 12.77 L10.52 9.75 L12.82 8.17 L15.60 10.34 L17.79 9.39 L17.65 6.04 L20.46 5.36 L22.16 8.35 L24.60 8.20 L25.85 5.03 L28.74 5.36 L29.09 8.71 L31.41 9.39 L33.85 6.88 L36.38 8.17 L35.34 11.36 L37.19 12.77 L40.45 11.31 L42.23 13.36 L39.96 15.91 L41.05 17.83 L44.63 17.64 L45.39 20.13 L42.23 21.66 Z" fill="url(#gGear)" stroke="#8a8a8a" stroke-width="0.6"/>
<ellipse cx="24.6" cy="22.6" rx="13" ry="10.6" fill="none" stroke="#f4f4f4" stroke-width="0.9"/>
<ellipse cx="24.6" cy="22.6" rx="12.6" ry="10.2" fill="url(#gGearRim)"/>
<ellipse cx="24.1" cy="24.9" rx="10.9" ry="6" fill="#fafafa" stroke="#6a6a6a" stroke-width="0.7"/>
</svg>
<div class="lb" style="left:245.5px;top:536.55px"><span style="letter-spacing:0.09px;margin-right:-0.09px">Sharing</span></div>
<svg class="ic" style="left:281px;top:485px" width="48" height="48" viewBox="0 0 48 48">
<ellipse cx="30" cy="43" rx="16" ry="3" fill="url(#gShadow)"/>
<path d="M9.5 25 L36.1 14.7" stroke="#555" stroke-width="3.2"/>
<path d="M9.5 25 L36.1 14.7" stroke="url(#gRod)" stroke-width="2"/>
<path d="M9.5 25 L36.1 34.9" stroke="#555" stroke-width="3.2"/>
<path d="M9.5 25 L36.1 34.9" stroke="url(#gRod)" stroke-width="2"/>
<circle cx="9.5" cy="25" r="6" fill="url(#gBall)" stroke="#5a5a5a" stroke-width="0.7"/>
<circle cx="36.1" cy="14.7" r="6.6" fill="url(#gBall)" stroke="#5a5a5a" stroke-width="0.7"/>
<circle cx="36.1" cy="34.9" r="6.6" fill="url(#gBall)" stroke="#5a5a5a" stroke-width="0.7"/>
</svg>
<div class="lb" style="left:363.5px;top:536.55px"><span style="letter-spacing:0.16px;margin-right:-0.16px">Universal</span><br><span style="letter-spacing:-0.12px;margin-right:0.12px">Access</span></div>
<svg class="ic" style="left:399px;top:485px" width="48" height="48" viewBox="0 0 48 48">
<ellipse cx="24" cy="45.5" rx="16" ry="2" fill="url(#gShadow)"/>
<circle cx="23.8" cy="24.6" r="20.2" fill="url(#gUA)" stroke="#1d4a92" stroke-width="1"/>
<circle cx="23.8" cy="24.6" r="19" fill="none" stroke="#9cc0ec" stroke-width="0.5" opacity="0.6"/>
<circle cx="23.4" cy="14.7" r="3.1" fill="#fff"/>
<path d="M11.1 18.6 Q17 19.6 20 19.8 H27 Q30 19.6 35.7 18.6 L35.7 19.8 Q30.5 21.6 27.4 22.4 L30.2 39.7 H28 L23.4 29.2 L18.8 39.7 H16.8 L19.6 22.4 Q16.4 21.6 11.1 19.8 Z" fill="#fff"/>
</svg>
<div class="lb" style="left:481.5px;top:536.55px"><span style="letter-spacing:0.24px;margin-right:-0.24px">Users</span></div>
<svg class="ic" style="left:517px;top:485px" width="48" height="48" viewBox="0 0 48 48">
<ellipse cx="28" cy="46.6" rx="17" ry="1.6" fill="url(#gShadow)"/>
<path d="M0.5 26 C0.5 20 4 17.4 10 17 C14 16.8 18 17.2 20 18 L20 31.3 H6 C2.6 31.3 0.5 29.4 0.5 26 Z" fill="url(#gUserBody)" stroke="#4a4a4a" stroke-width="0.9"/>
<ellipse cx="13" cy="10.3" rx="8" ry="9.2" fill="url(#gUser)" stroke="#4a4a4a" stroke-width="0.9"/>
<path d="M8.3 40 C8.3 31 12 26 20 25 Q27.3 24 34.6 25 C43 26 46.8 31 46.8 40 C46.8 44 44.5 46 40.5 46 H14.6 C10.6 46 8.3 44 8.3 40 Z" fill="url(#gUserBody)" stroke="#4a4a4a" stroke-width="0.9"/>
<ellipse cx="27.3" cy="15.3" rx="12.2" ry="13" fill="url(#gUser)" stroke="#4a4a4a" stroke-width="0.9"/>
</svg>
<div id="wm"><span>h</span><span>t</span><span>t</span><span>p</span><span>s</span><span>:</span><span>/</span><span>/</span><span>b</span><span>l</span><span>o</span><span>g</span><span>.</span><span>c</span><span>s</span><span>d</span><span>n</span><span>.</span><span>n</span><span>e</span><span>t</span><span>/</span><span>q</span><span>q</span><span>_</span><span>4</span><span>2</span><span>2</span><span>2</span><span>4</span><span>3</span><span>9</span><span>6</span></div>
</body></html>
